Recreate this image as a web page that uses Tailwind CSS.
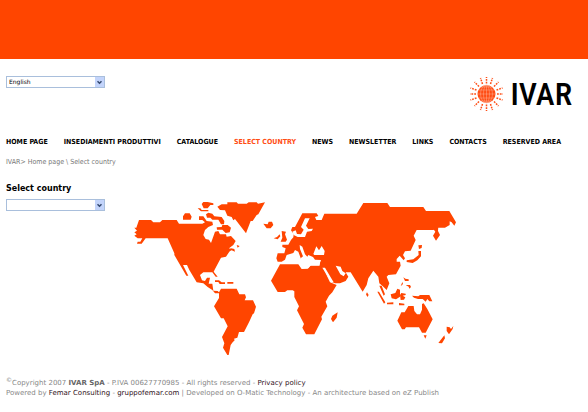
<!DOCTYPE html>
<html lang="en">
<head>
    <meta charset="UTF-8">
    <meta name="viewport" content="width=device-width, initial-scale=1.0">
    <title>IVAR - Select country</title>
    <script src="https://cdn.jsdelivr.net/npm/@tailwindcss/browser@4"></script>
</head>
<body class="bg-white font-['DejaVu_Sans',Verdana,sans-serif] text-[7px] text-black">
    <div class="h-[59px] bg-[#ff4500]"></div>

    <header class="flex items-start justify-between pl-[6px] pr-4 pt-4">
        <div class="relative mt-[1px] w-[99px]">
            <select id="language" aria-label="Language" class="block h-[12px] w-full appearance-none border border-[#a9bfdc] bg-white pl-[2px] pr-[12px] text-[6px] leading-[10px] text-black">
                <option>English</option>
                <option>Italiano</option>
            </select>
            <span class="pointer-events-none absolute right-px top-px flex h-[10px] w-[9px] items-center justify-center bg-[#c3d4fb]">
                <svg class="h-[5px] w-[5px]" viewBox="0 0 5 5" fill="none" stroke="#34496f" stroke-width="1.5"><path d="M0.5 1.2L2.5 3.2L4.5 1.2"/></svg>
            </span>
        </div>
        <a href="#" class="flex items-center gap-[7px]">
            <svg class="h-[38px] w-[33px]" viewBox="-16.5 -19 33 38">
                <g fill="none" stroke="#ff4d14" stroke-width="1.5" stroke-dasharray="1.8 1">
                    <path d="M0 -10.5V-17M0 10.5V17M-10.5 0H-16.5M10.5 0H16.5"/>
                    <path d="M4 -10L6 -16M-4 -10L-6 -16M4 10L6 16M-4 10L-6 16"/>
                    <path d="M7.5 -7.5L12 -12M-7.5 -7.5L-12 -12M7.5 7.5L12 12M-7.5 7.5L-12 12"/>
                    <path d="M10 -4L16 -6M-10 -4L-16 -6M10 4L16 6M-10 4L-16 6"/>
                </g>
                <circle r="9" fill="#ff4d14"/>
                <g fill="none" stroke="#ffc4ad" stroke-width="0.4">
                    <path d="M0 -9V9M-9 0H9M-8 -4H8M-8 4H8M-6 -7H6M-6 7H6"/>
                    <ellipse rx="3" ry="9"/>
                    <ellipse rx="6" ry="9"/>
                </g>
            </svg>
            <span class="font-['Roboto_Condensed',Roboto,sans-serif] text-[32px] font-medium leading-[38px]">IVAR</span>
        </a>
    </header>

    <nav class="mt-[24px] flex flex-wrap gap-x-[16px] px-[6px] font-['DejaVu_Sans_Condensed','DejaVu_Sans',sans-serif] font-bold leading-[10px]">
        <a href="#">HOME PAGE</a>
        <a href="#">INSEDIAMENTI PRODUTTIVI</a>
        <a href="#">CATALOGUE</a>
        <a href="#" class="text-[#ff4d14]">SELECT COUNTRY</a>
        <a href="#">NEWS</a>
        <a href="#">NEWSLETTER</a>
        <a href="#">LINKS</a>
        <a href="#">CONTACTS</a>
        <a href="#">RESERVED AREA</a>
    </nav>

    <div class="mt-[10px] px-[6px] font-['DejaVu_Sans_Condensed','DejaVu_Sans',sans-serif] leading-[10px] text-[#777]">
        <a href="#">IVAR</a>&gt; <a href="#">Home page</a> \ Select country
    </div>

    <main class="flex px-[6px] pt-[17px]">
        <div class="w-[119px] shrink-0">
            <h1 class="text-[8px] font-bold leading-[10px]"><label for="country">Select country</label></h1>
            <div class="relative mt-[5px] w-[99px]">
                <select id="country" class="block h-[12px] w-full appearance-none border border-[#a9bfdc] bg-white pl-[2px] pr-[12px] text-[6px] leading-[10px] text-black">
                    <option></option>
                </select>
                <span class="pointer-events-none absolute right-px top-px flex h-[10px] w-[9px] items-center justify-center bg-[#c3d4fb]">
                    <svg class="h-[5px] w-[5px]" viewBox="0 0 5 5" fill="none" stroke="#34496f" stroke-width="1.5"><path d="M0.5 1.2L2.5 3.2L4.5 1.2"/></svg>
                </span>
            </div>
        </div>
        <svg class="mt-[11px] w-full max-w-[335px]" viewBox="0 0 1005 495" fill="#ff4500" role="img" aria-label="World map">
            <!-- North and Central America -->
            <path d="M42 75H78L85 82H105L112 75H155L162 86H232L240 82L232 75H222V64H235L245 78L262 80L264 90L250 96L240 105L235 120L242 132L252 134L258 144L270 110L280 108L285 118L303 118L305 125L318 123L332 138L325 150L312 160L318 163L303 185L288 188L270 222L266 230L278 245H272L262 232H235L225 240L231 256L240 258L246 248H255L251 266H262L265 287L278 288L285 295H270L262 285L248 276L235 265L215 262L193 225L186 210H174L190 242H184L148 180V175L128 130H62L50 146H36L38 140H46L52 130H38L28 122L35 118L28 112L36 107L28 98H34Z"/>
            <!-- Arctic islands and Caribbean -->
            <path d="M174 64L180 55H194L200 65L197 74H174ZM230 27L235 21H248L265 25V30H256L248 40H236ZM218 40H226L230 45H250V49H228ZM243 58L250 53L262 56L268 64L290 66L298 78L297 88H288L280 74H262L256 68H246ZM275 97L290 96L292 90H308L318 98L314 112L302 114L292 104H276ZM335 150L344 153L338 158ZM308 165L318 160L328 162L330 170L320 166L310 170ZM270 256H282L290 262H300V267H284L280 261H270ZM307 261H325V266H307Z"/>
            <!-- Greenland and Iceland -->
            <path transform="translate(225 0)" d="M52 35L65 28H82V22H110L114 26H140L146 22H170L174 26L195 22L175 58L170 60L158 78H152L138 115L105 72L100 76L95 66L82 62L75 46L60 45ZM190 86L203 88L206 80H216L220 90L212 100H200Z"/>
            <!-- South America -->
            <path transform="translate(210 210)" d="M72 82L78 71H125L133 88H150L153 97L149 106H174L183 125L177 145L173 148L162 172L147 201H132L127 218L117 221L119 226L113 232L107 240L101 270H97L84 248L88 235L81 216L98 184L86 160H78L57 124L72 99Z"/>
            <!-- Africa and Madagascar -->
            <path transform="translate(210 210)" d="M255 -2H310L320 12L338 11L345 2H382L386 12L405 52L425 60L412 82L402 92L392 110L397 124L379 155L381 163L358 208H333L322 188L327 177L306 136L312 124L298 96V79L293 76H277L270 81H248L228 47ZM428 142L425 158L414 172L408 162L412 152Z"/>
            <!-- Europe and Asia -->
            <path transform="translate(420 0)" d="M38 175H58L62 160L52 156V149H70L78 135L85 127L86 118L78 106L82 96H90L112 55H155L160 63L150 66L154 75H170L178 56H275L295 24H367L375 36H475L483 48H553L573 82L568 92L560 82L554 79V90L540 98H518L505 105H455L446 122L452 135L437 167L420 169L414 180L420 190L416 196L404 182L395 192V200H405L407 212L393 238L370 240L365 245L373 265L365 285L355 275L343 265L340 245L325 227L310 250L305 270L293 290L257 232H242L250 245L242 258L225 265H210L202 262L172 218H163L166 196H147L118 190L108 192L100 170L90 165L85 174L65 180L60 194L50 200H38L34 190Z"/>
            <!-- Baltic, Black, Adriatic, Aegean and Gulf waters -->
            <path fill="#fff" transform="translate(420 0)" d="M120 70H134L123 92L130 102L144 101L140 108L126 110L120 126H98L86 120L82 110L92 106L96 117L108 118L116 104L108 96ZM145 177L154 154L162 166L170 153L179 168L177 180H148ZM104 150L112 155L120 178L127 185L130 180L144 186L150 194L168 195L162 211H138L130 220H110L104 206L107 190L114 184L105 162ZM172 218H180L206 262L198 260ZM212 212L227 215L232 228L242 235L236 244L226 238Z"/>
            <!-- British Isles -->
            <path transform="translate(420 0)" d="M50 108L63 110L60 118L66 134L62 140H47L52 128ZM26 130L36 126L44 118L46 124L38 133Z"/>
            <!-- Japan and Sakhalin -->
            <path transform="translate(675 0)" d="M246 97L265 94L264 108L270 120L258 137L249 122L256 110ZM205 151L216 150L215 159L207 162ZM205 168H213V184L202 196L188 204L170 201V196L190 193L206 180Z"/>
            <!-- South-East Asia -->
            <path transform="translate(645 210)" d="M78 88L81 82L86 90L82 96ZM112 80H117L136 112L132 116ZM118 62L125 62L135 88L131 92ZM141 113L160 112V118H141ZM177 114L193 116V121H177ZM152 88L166 84L172 71L180 74V95L168 103L155 100ZM180 90L184 84L197 86V90L188 92L196 97L192 104L182 105ZM190 37L196 41L206 43V48H195ZM182 64L187 51L189 57ZM197 60L210 60L213 66L208 71L206 65ZM216 92L235 94L240 90H268L277 109H268L262 102L257 110L248 102H234L222 98Z"/>
            <!-- Australia and New Zealand -->
            <path transform="translate(645 210)" d="M205 123H221L223 138L231 148H240L246 134V117L251 115L262 132L278 163L257 203H246L237 187H198L194 193H186L172 167L184 142H194ZM251 211H260L256 221ZM320 185L329 187L333 192L340 183L338 192L327 208L320 198ZM313 211L315 220L306 235L295 234Z"/>
        </svg>
    </main>

    <footer class="px-[6px] pt-[18px] leading-[10px] text-[#888]">
        <p><sup class="text-[6px] leading-none">©</sup>Copyright 2007 <b class="text-[#666]">IVAR SpA</b> - P.IVA 00627770985 - All rights reserved - <a href="#" class="text-[#301020]">Privacy policy</a></p>
        <p>Powered by <a href="#" class="text-[#301020]">Femar Consulting</a> - <a href="#" class="text-[#301020]">gruppofemar.com</a> | Developed on O-Matic Technology - An architecture based on eZ Publish</p>
    </footer>
</body>
</html>
